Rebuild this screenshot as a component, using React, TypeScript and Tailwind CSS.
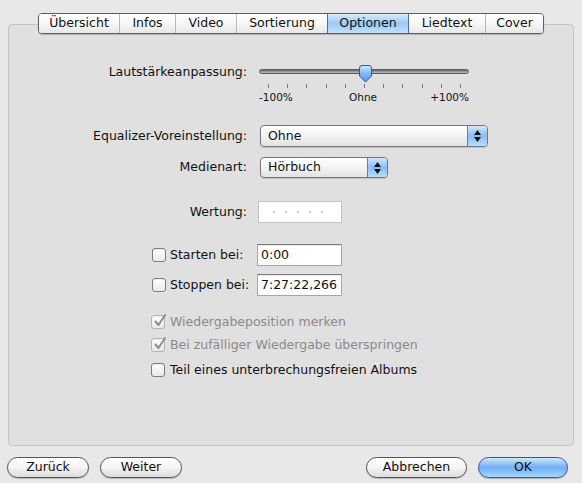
import React from "react";

const tabs = [
  { label: "Übersicht", w: "w-[80px]" },
  { label: "Infos", w: "w-[56px]" },
  { label: "Video", w: "w-[61px]" },
  { label: "Sortierung", w: "w-[91px]" },
  { label: "Optionen", w: "w-[81px]", active: true },
  { label: "Liedtext", w: "w-[77px]" },
  { label: "Cover", w: "w-[58px]" },
];

function Check({ checked = false, disabled = false }: { checked?: boolean; disabled?: boolean }) {
  return (
    <div className={`relative h-[14px] w-[14px] shrink-0 rounded-[3px] border bg-gradient-to-b from-white to-[#e9e9e9] shadow-[inset_0_1px_1px_rgba(0,0,0,0.08)] ${disabled ? "border-[#b3b3b3]" : "border-[#7c7c7c]"}`}>
      {checked && (
        <svg className="absolute -top-[3px] left-[1px]" width="14" height="15" viewBox="0 0 14 15">
          <path d="M2.5 8.5 L5.5 12 L12 2" fill="none" stroke={disabled ? "#8d8d8d" : "#111"} strokeWidth="2" strokeLinecap="round" strokeLinejoin="round" />
        </svg>
      )}
    </div>
  );
}

function Popup({ value, w }: { value: string; w: string }) {
  return (
    <div className={`flex h-full ${w} overflow-hidden rounded-[4px] border border-[#777] bg-gradient-to-b from-white via-[#f3f3f3] to-[#e2e2e2] shadow-[0_1px_1px_rgba(0,0,0,0.15)]`}>
      <div className="flex flex-1 items-center pl-[7px]">{value}</div>
      <div className="flex w-[20px] flex-col items-center justify-center gap-[2px] border-l border-[#5c7fb5] bg-gradient-to-b from-[#d2e7fc] via-[#87bdf4] to-[#b9dcfd]">
        <svg width="7" height="5" viewBox="0 0 7 5"><path d="M3.5 0 L7 5 L0 5 Z" fill="#111" /></svg>
        <svg width="7" height="5" viewBox="0 0 7 5"><path d="M0 0 L7 0 L3.5 5 Z" fill="#111" /></svg>
      </div>
    </div>
  );
}

function TextBox({ value }: { value: string }) {
  return (
    <div className="flex h-[22px] w-[85px] items-center border border-[#a6a6a6] border-t-[#7d7d7d] bg-white pl-[3px] shadow-[inset_0_1px_1px_rgba(0,0,0,0.1)]">
      {value}
    </div>
  );
}

export default function App() {
  return (
    <div className="h-[483px] w-[582px] overflow-hidden bg-[#e8e8e8] text-[12.5px] text-[#111] [font-family:'DejaVu_Sans',sans-serif]">
      {/* Tabs */}
      <div className="relative z-10 pl-[38px] pt-[13px]">
        <div className="flex h-[21px] w-[506px] overflow-hidden rounded-[4px] border border-[#5e5e5e] shadow-[0_1px_1px_rgba(0,0,0,0.2)]">
          {tabs.map((t, i) => (
            <div key={t.label}
              className={`flex ${t.w} items-center justify-center ${i > 0 ? "border-l" : ""} ${t.active ? "border-[#4d6fae] bg-gradient-to-b from-[#d7eafd] via-[#9ccaf7] to-[#bfe0fd]" : "border-[#b8b8b8] bg-gradient-to-b from-white via-[#f7f7f7] to-[#e7e7e7]"} ${i === 5 ? "border-l-[#4d6fae]" : ""}`}>
              {t.label}
            </div>
          ))}
        </div>
      </div>

      {/* Panel */}
      <div className="mx-[8px] -mt-[10px] h-[422px] rounded-[4px] border border-[#c4c4c4] bg-[#e0e0e0]">
        {/* Volume */}
        <div className="mt-[37px] flex">
          <div className="h-[20px] w-[238px] text-right leading-[20px]">Lautstärkeanpassung:</div>
          <div className="relative ml-[12px] h-[42px] w-[210px]">
            <div className="absolute left-0 right-0 top-[7px] h-[5px] rounded-full border border-[#5a5a5a] bg-gradient-to-b from-[#6a6a6a] to-[#bdbdbd]" />
            <div className="absolute left-[9px] right-[8px] top-[22px] flex justify-between">
              {Array.from({ length: 11 }).map((_, i) => (
                <div key={i} className="h-[4px] w-px bg-[#777]" />
              ))}
            </div>
            <svg className="absolute left-[99px] top-[3px]" width="15" height="18" viewBox="0 0 15 18">
              <defs>
                <linearGradient id="th" x1="0" y1="0" x2="0" y2="1">
                  <stop offset="0" stopColor="#d6ebfe" />
                  <stop offset="0.5" stopColor="#7fb6f3" />
                  <stop offset="1" stopColor="#4d95ea" />
                </linearGradient>
              </defs>
              <path d="M1.5 3 Q1.5 0.5 4 0.5 L11 0.5 Q13.5 0.5 13.5 3 L13.5 11 L7.5 17 L1.5 11 Z" fill="url(#th)" stroke="#2e5a9c" />
            </svg>
            <div className="absolute left-0 top-[29px] text-[10.5px] leading-[13px]">-100%</div>
            <div className="absolute left-[90px] top-[29px] text-[10.5px] leading-[13px]">Ohne</div>
            <div className="absolute right-0 top-[29px] text-[10.5px] leading-[13px]">+100%</div>
          </div>
        </div>

        {/* Equalizer */}
        <div className="mt-[21px] flex h-[22px] items-center">
          <div className="w-[238px] text-right">Equalizer-Voreinstellung:</div>
          <div className="ml-[13px] h-full"><Popup value="Ohne" w="w-[228px]" /></div>
        </div>

        {/* Medienart */}
        <div className="mt-[10px] flex h-[21px] items-center">
          <div className="w-[238px] text-right">Medienart:</div>
          <div className="ml-[13px] h-full"><Popup value="Hörbuch" w="w-[128px]" /></div>
        </div>

        {/* Wertung */}
        <div className="mt-[23px] flex h-[22px] items-center">
          <div className="w-[238px] text-right">Wertung:</div>
          <div className="ml-[11px] flex h-full w-[84px] items-center gap-[10px] border border-[#c2c2c2] bg-white pl-[14px]">
            {Array.from({ length: 5 }).map((_, i) => (
              <div key={i} className="h-[2px] w-[2px] rounded-full bg-[#b5b5b5]" />
            ))}
          </div>
        </div>

        {/* Start / Stop */}
        <div className="ml-[143px] mt-[21px] flex h-[22px] items-center">
          <div className="flex w-[105px] items-center gap-[4px]"><Check /><span>Starten bei:</span></div>
          <TextBox value="0:00" />
        </div>
        <div className="ml-[143px] mt-[8px] flex h-[22px] items-center">
          <div className="flex w-[105px] items-center gap-[4px]"><Check /><span>Stoppen bei:</span></div>
          <TextBox value="7:27:22,266" />
        </div>

        {/* Options */}
        <div className="ml-[142px] mt-[16px] flex h-[20px] items-center gap-[5px] text-[#8a8a8a]">
          <Check checked disabled /><span>Wiedergabeposition merken</span>
        </div>
        <div className="ml-[142px] mt-[3px] flex h-[20px] items-center gap-[5px] text-[#8a8a8a]">
          <Check checked disabled /><span>Bei zufälliger Wiedergabe überspringen</span>
        </div>
        <div className="ml-[142px] mt-[5px] flex h-[20px] items-center gap-[5px]">
          <Check /><span>Teil eines unterbrechungsfreien Albums</span>
        </div>
      </div>

      {/* Buttons */}
      <div className="mt-[11px] flex h-[21px] pl-[7px] pr-[14px]">
        <button className="w-[82px] rounded-full border border-[#555] bg-gradient-to-b from-white via-[#f4f4f4] to-[#dcdcdc] shadow-[0_1px_1px_rgba(0,0,0,0.2)]">Zurück</button>
        <button className="ml-[11px] w-[82px] rounded-full border border-[#555] bg-gradient-to-b from-white via-[#f4f4f4] to-[#dcdcdc] shadow-[0_1px_1px_rgba(0,0,0,0.2)]">Weiter</button>
        <div className="flex-1" />
        <button className="w-[101px] rounded-full border border-[#555] bg-gradient-to-b from-white via-[#f4f4f4] to-[#dcdcdc] shadow-[0_1px_1px_rgba(0,0,0,0.2)]">Abbrechen</button>
        <button className="ml-[11px] w-[90px] rounded-full border border-[#2f5c9e] bg-gradient-to-b from-[#d0e7fd] via-[#6eaef2] to-[#a9d6fd] shadow-[0_1px_1px_rgba(0,0,0,0.25)]">OK</button>
      </div>
    </div>
  );
}
